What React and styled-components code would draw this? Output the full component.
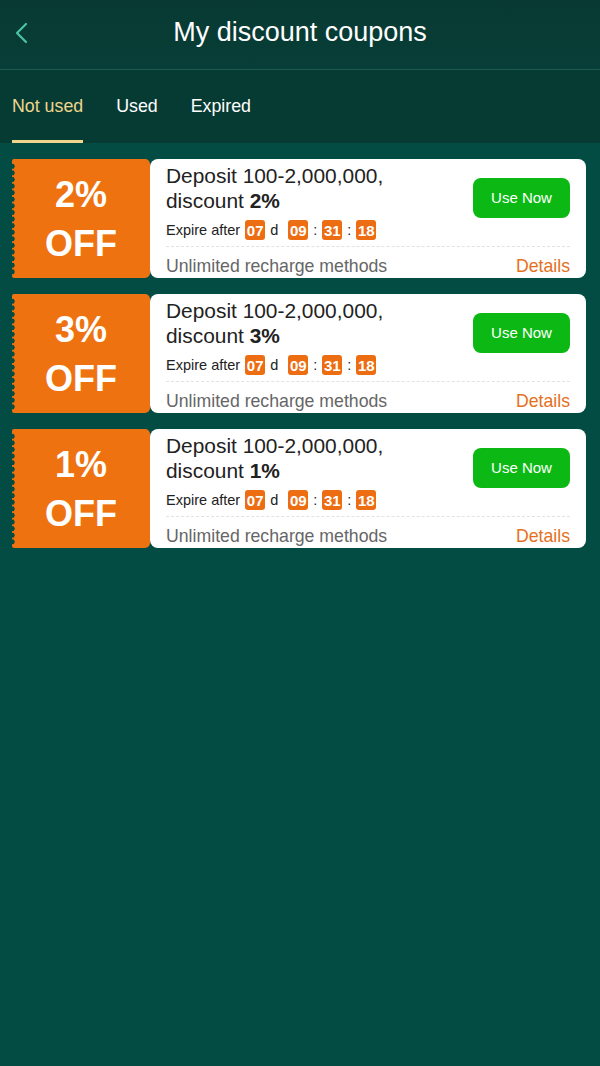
import React, {useState} from "react"
import styled, {createGlobalStyle} from "styled-components"

const BG = "#034c44"
const ORANGE = "#ef7211"

const GlobalStyle = createGlobalStyle`
  html, body {
    margin: 0;
    padding: 0;
    background: ${BG};
  }
  body {
    font-family: "Liberation Sans", Arial, sans-serif;
  }
  #root {
    min-height: 1066px;
    background: ${BG};
  }
`

const coupons = [
    {id: 1, rate: 2},
    {id: 2, rate: 3},
    {id: 3, rate: 1},
]

const tabs = ["Not used", "Used", "Expired"]

function BackIcon() {
    return (
        <svg width="16" height="24" viewBox="0 0 16 24" fill="none">
            <path d="M12 3 L3 12 L12 21" stroke="#4cc3a2" strokeWidth="2.2" strokeLinecap="round" strokeLinejoin="round"/>
        </svg>
    )
}

function Coupon({rate}) {
    return (
        <StyledCoupon>
            <StyledStub>
                <span>{rate}%</span>
                <span>OFF</span>
            </StyledStub>
            <StyledCard>
                <StyledTop>
                    <StyledInfo>
                        <StyledTitle>
                            Deposit 100-2,000,000,<br/>
                            discount <b>{rate}%</b>
                        </StyledTitle>
                        <StyledExpire>
                            <span>Expire after</span>
                            <StyledBadge>07</StyledBadge>
                            <span>d</span>
                            <StyledBadge $gap>09</StyledBadge>
                            <span>:</span>
                            <StyledBadge>31</StyledBadge>
                            <span>:</span>
                            <StyledBadge>18</StyledBadge>
                        </StyledExpire>
                    </StyledInfo>
                    <StyledUseButton>Use Now</StyledUseButton>
                </StyledTop>
                <StyledBottom>
                    <span>Unlimited recharge methods</span>
                    <StyledDetails>Details</StyledDetails>
                </StyledBottom>
            </StyledCard>
        </StyledCoupon>
    )
}

function App() {
    const [active, setActive] = useState(0)

    return (
        <StyledPage>
            <GlobalStyle/>
            <StyledHeader>
                <StyledBack><BackIcon/></StyledBack>
                <StyledHeading>My discount coupons</StyledHeading>
            </StyledHeader>
            <StyledTabs>
                {tabs.map((tab, i) => (
                    <StyledTab key={tab} $active={i === active} onClick={() => setActive(i)}>
                        {tab}
                    </StyledTab>
                ))}
            </StyledTabs>
            <StyledList>
                {coupons.map((c) => <Coupon key={c.id} rate={c.rate}/>)}
            </StyledList>
        </StyledPage>
    )
}

const StyledPage = styled.div`
  width: 600px;
  min-height: 1066px;
  background: ${BG};
`

const StyledHeader = styled.header`
  position: relative;
  height: 69px;
  display: flex;
  align-items: center;
  justify-content: center;
  background: linear-gradient(#083a33, #073e37);
  border-bottom: 1px solid #1d5a50;
`

const StyledBack = styled.button`
  position: absolute;
  left: 14px;
  top: 21px;
  padding: 0;
  border: 0;
  background: none;
  display: flex;
`

const StyledHeading = styled.h1`
  margin: 0;
  color: #fff;
  font-size: 27px;
  font-weight: 400;
  margin-top: -5px;
`

const StyledTabs = styled.nav`
  height: 73px;
  display: flex;
  gap: 33px;
  padding-left: 12px;
  background: #063b34;
`

const StyledTab = styled.div`
  display: flex;
  align-items: center;
  padding-top: 2px;
  font-size: 17.8px;
  color: ${(p) => (p.$active ? "#f0d58c" : "#fff")};
  border-bottom: 3px solid ${(p) => (p.$active ? "#f0d58c" : "transparent")};
  box-sizing: border-box;
  cursor: pointer;
`

const StyledList = styled.div`
  display: flex;
  flex-direction: column;
  gap: 16px;
  padding: 16px 14px 0 12px;
`

const StyledCoupon = styled.div`
  display: flex;
  height: 119px;
`

const StyledStub = styled.div`
  position: relative;
  width: 138px;
  flex-shrink: 0;
  display: flex;
  flex-direction: column;
  align-items: center;
  justify-content: center;
  gap: 13px;
  padding-top: 2px;
  box-sizing: border-box;
  background: ${ORANGE};
  border-radius: 2px 5px 5px 2px;
  color: #fff;
  font-size: 36px;
  font-weight: 700;
  line-height: 36px;

  &::before {
    content: "";
    position: absolute;
    left: 0;
    top: 4px;
    bottom: 2px;
    width: 4px;
    background: radial-gradient(circle at 0 50%, ${BG} 2.4px, transparent 2.9px) 0 0 / 4px 6.6px repeat-y;
  }
`

const StyledCard = styled.div`
  flex: 1;
  display: flex;
  flex-direction: column;
  background: #fff;
  border-radius: 8px;
  padding: 4px 16px 0 16px;
`

const StyledTop = styled.div`
  display: flex;
  align-items: center;
  justify-content: space-between;
  padding-bottom: 6px;
  border-bottom: 1px dashed #e2e2e2;
`

const StyledInfo = styled.div`
  display: flex;
  flex-direction: column;
  gap: 7px;
`

const StyledTitle = styled.div`
  font-size: 20.9px;
  line-height: 25px;
  color: #222;

  b {
    font-weight: 700;
  }
`

const StyledExpire = styled.div`
  display: flex;
  align-items: center;
  gap: 5px;
  font-size: 14.5px;
  color: #222;
`

const StyledBadge = styled.span`
  display: inline-flex;
  align-items: center;
  justify-content: center;
  height: 20px;
  min-width: 20px;
  padding: 0 1px;
  box-sizing: border-box;
  border-radius: 3px;
  background: #ec6d12;
  color: #fff;
  font-size: 15px;
  font-weight: 700;
  margin-left: ${(p) => (p.$gap ? "5px" : "0")};
`

const StyledUseButton = styled.button`
  width: 97px;
  height: 40px;
  margin-top: -8px;
  border: 0;
  border-radius: 8px;
  background: #0cb914;
  color: #fff;
  font-family: inherit;
  font-size: 15px;
  cursor: pointer;
`

const StyledBottom = styled.div`
  flex: 1;
  display: flex;
  align-items: center;
  justify-content: space-between;
  padding-top: 8px;
  font-size: 17.7px;
  color: #666;
`

const StyledDetails = styled.span`
  color: #e4701c;
`

export default App
